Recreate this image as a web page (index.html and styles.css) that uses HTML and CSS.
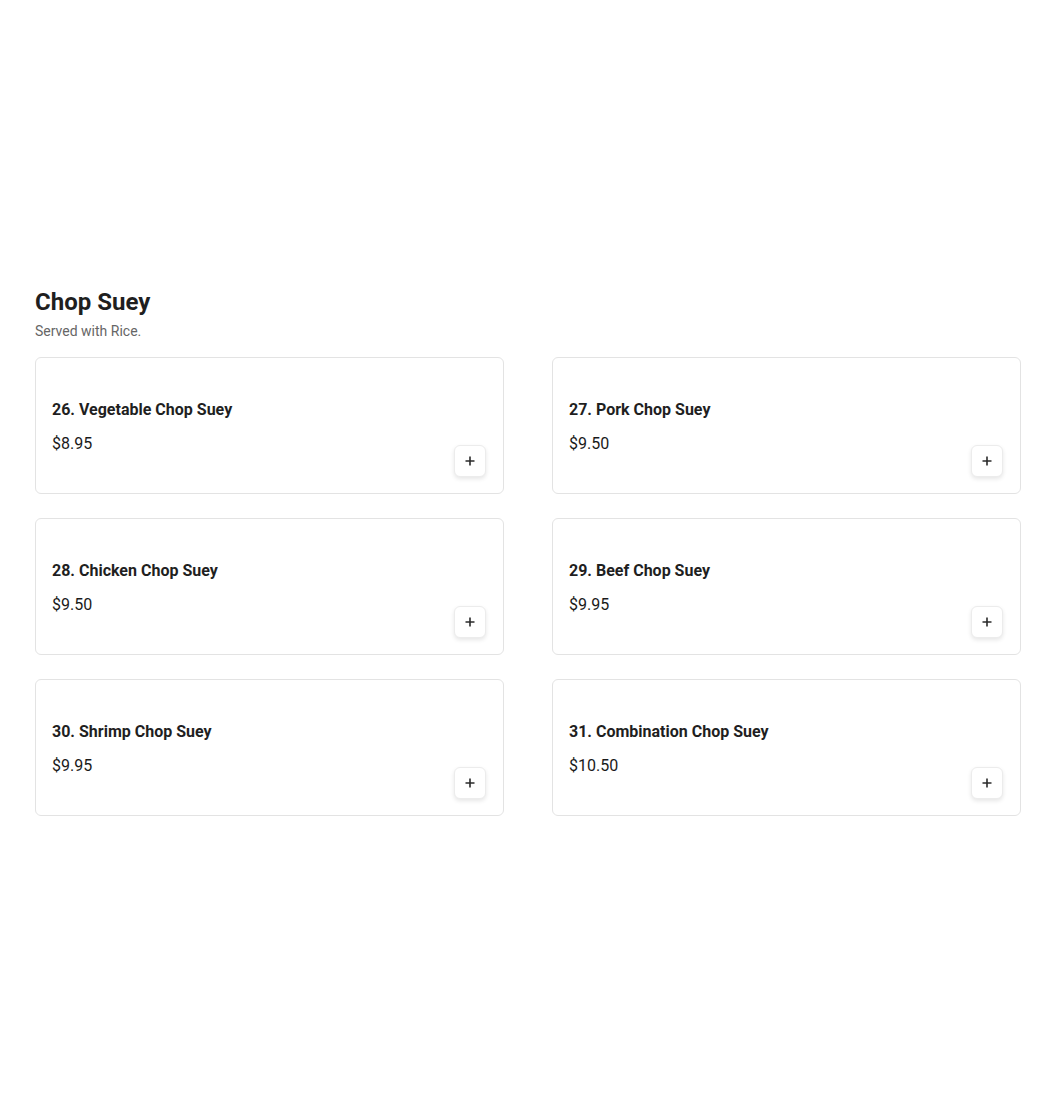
FILE: index.html
```html
<!DOCTYPE html>
<html>
<head>
<meta charset="utf-8">
<link rel="stylesheet" href="styles.css">
</head>
<body>
<section class="menu-section">
  <h2 class="section-title">Chop Suey</h2>
  <p class="section-desc">Served with Rice.</p>
  <div class="grid">
    <div class="card">
      <div class="info"><div class="name">26. Vegetable Chop Suey</div><div class="price">$8.95</div></div>
      <button class="add"><svg width="12" height="12" viewBox="0 0 12 12"><path d="M6 1.5v9M1.5 6h9" stroke="#2b2b2b" stroke-width="1.6" fill="none"/></svg></button>
    </div>
    <div class="card">
      <div class="info"><div class="name">27. Pork Chop Suey</div><div class="price">$9.50</div></div>
      <button class="add"><svg width="12" height="12" viewBox="0 0 12 12"><path d="M6 1.5v9M1.5 6h9" stroke="#2b2b2b" stroke-width="1.6" fill="none"/></svg></button>
    </div>
    <div class="card">
      <div class="info"><div class="name">28. Chicken Chop Suey</div><div class="price">$9.50</div></div>
      <button class="add"><svg width="12" height="12" viewBox="0 0 12 12"><path d="M6 1.5v9M1.5 6h9" stroke="#2b2b2b" stroke-width="1.6" fill="none"/></svg></button>
    </div>
    <div class="card">
      <div class="info"><div class="name">29. Beef Chop Suey</div><div class="price">$9.95</div></div>
      <button class="add"><svg width="12" height="12" viewBox="0 0 12 12"><path d="M6 1.5v9M1.5 6h9" stroke="#2b2b2b" stroke-width="1.6" fill="none"/></svg></button>
    </div>
    <div class="card">
      <div class="info"><div class="name">30. Shrimp Chop Suey</div><div class="price">$9.95</div></div>
      <button class="add"><svg width="12" height="12" viewBox="0 0 12 12"><path d="M6 1.5v9M1.5 6h9" stroke="#2b2b2b" stroke-width="1.6" fill="none"/></svg></button>
    </div>
    <div class="card">
      <div class="info"><div class="name">31. Combination Chop Suey</div><div class="price">$10.50</div></div>
      <button class="add"><svg width="12" height="12" viewBox="0 0 12 12"><path d="M6 1.5v9M1.5 6h9" stroke="#2b2b2b" stroke-width="1.6" fill="none"/></svg></button>
    </div>
  </div>
</section>
</body>
</html>
```
FILE: styles.css
```css
html, body {
  margin: 0;
  padding: 0;
  background: #ffffff;
  font-family: Roboto, "Liberation Sans", Arial, sans-serif;
  color: #1f1f1f;
}
.menu-section {
  padding: 288px 29px 0 35px;
}
.section-title {
  margin: 0;
  font-size: 24px;
  line-height: 28px;
  font-weight: 700;
  color: #1f1f1f;
}
.section-desc {
  margin: 5px 0 0 0;
  font-size: 14px;
  line-height: 20px;
  color: #666666;
}
.grid {
  margin-top: 16px;
  display: grid;
  grid-template-columns: 469px 469px;
  column-gap: 48px;
  row-gap: 24px;
}
.card {
  box-sizing: border-box;
  height: 137px;
  border: 1px solid #e3e3e3;
  border-radius: 6px;
  padding: 40px 17px 16px 16px;
  display: flex;
  justify-content: space-between;
  align-items: flex-end;
}
.info {
  align-self: flex-start;
  display: flex;
  flex-direction: column;
  gap: 10px;
}
.name {
  font-size: 16px;
  line-height: 24px;
  font-weight: 700;
  color: #1f1f1f;
}
.price {
  font-size: 16px;
  line-height: 24px;
  font-weight: 400;
  color: #1a1a1a;
}
.add {
  width: 32px;
  height: 32px;
  box-sizing: border-box;
  padding: 0;
  border: 1px solid #ececec;
  border-radius: 6px;
  background: #ffffff;
  box-shadow: 0 2px 4px rgba(0, 0, 0, 0.1);
  display: flex;
  align-items: center;
  justify-content: center;
  cursor: pointer;
}
```
